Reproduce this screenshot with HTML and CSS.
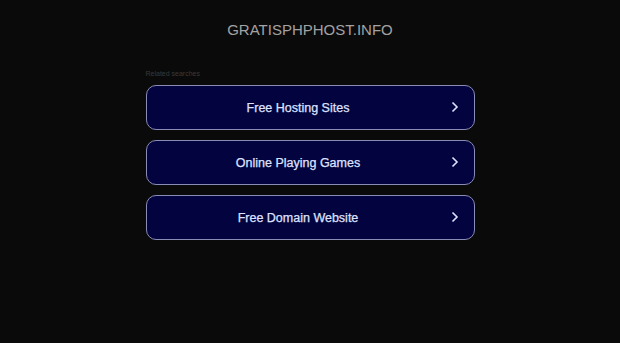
FILE: index.html
```html
<!DOCTYPE html>
<html lang="en">
<head>
    <meta charset="UTF-8">
    <title>gratisphphost.info</title>
    <link rel="stylesheet" href="styles.css">
</head>
<body>
    <header class="domain">gratisphphost.info</header>
    <main class="searches">
        <p class="label">Related searches</p>
        <a class="link" href="#">Free Hosting Sites
            <svg class="arrow" viewBox="0 0 8 12" width="8" height="12"><path d="M1.5 1.5 L6 6 L1.5 10.5" fill="none" stroke="currentColor" stroke-width="1.6"/></svg>
        </a>
        <a class="link" href="#">Online Playing Games
            <svg class="arrow" viewBox="0 0 8 12" width="8" height="12"><path d="M1.5 1.5 L6 6 L1.5 10.5" fill="none" stroke="currentColor" stroke-width="1.6"/></svg>
        </a>
        <a class="link" href="#">Free Domain Website
            <svg class="arrow" viewBox="0 0 8 12" width="8" height="12"><path d="M1.5 1.5 L6 6 L1.5 10.5" fill="none" stroke="currentColor" stroke-width="1.6"/></svg>
        </a>
    </main>
</body>
</html>
```

FILE: styles.css
```css
body {
    margin: 0;
    background: #0a0a0a;
    font-family: Arial, "Liberation Sans", sans-serif;
}
.domain {
    text-align: center;
    text-transform: uppercase;
    color: #a3a3a3;
    font-size: 15px;
    padding-top: 21px;
    line-height: 17px;
}
.searches {
    width: 329px;
    margin: 0 auto;
    padding-top: 32px;
    display: flex;
    flex-direction: column;
    gap: 10px;
}
.label {
    margin: 0 0 -3px;
    font-size: 7px;
    line-height: 8px;
    color: #3a3a3a;
}
.link {
    position: relative;
    display: flex;
    align-items: center;
    justify-content: center;
    height: 43px;
    padding-right: 24px;
    border: 1px solid #8a8cb8;
    border-radius: 10px;
    background: #02033f;
    color: #dfe2ff;
    font-size: 12.5px;
    text-decoration: none;
    -webkit-text-stroke: 0.25px #dfe2ff;
}
.arrow {
    position: absolute;
    right: 15px;
    top: 15px;
}
```
